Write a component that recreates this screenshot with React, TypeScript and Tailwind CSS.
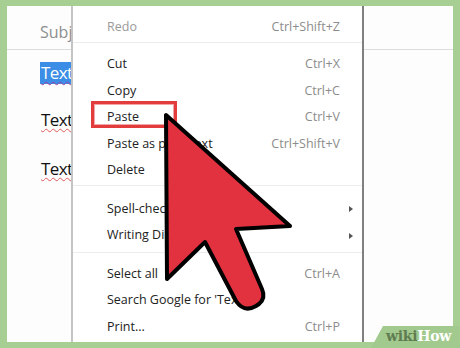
import React from 'react';

type Item = { label: string; shortcut?: string; submenu?: boolean };

const groups: Item[][] = [
	[
		{ label: 'Cut', shortcut: 'Ctrl+X' },
		{ label: 'Copy', shortcut: 'Ctrl+C' },
		{ label: 'Paste', shortcut: 'Ctrl+V' },
		{ label: 'Paste as plain text', shortcut: 'Ctrl+Shift+V' },
		{ label: 'Delete' },
	],
	[
		{ label: 'Spell-check', submenu: true },
		{ label: 'Writing Direction', submenu: true },
	],
	[
		{ label: 'Select all', shortcut: 'Ctrl+A' },
		{ label: "Search Google for 'Text'" },
		{ label: 'Print...', shortcut: 'Ctrl+P' },
	],
];

function Row({ item, muted }: { item: Item; muted?: boolean }) {
	return (
		<div className="flex h-[26.5px] items-center pl-[34px] pr-[9px] pt-[5px]">
			<span className={`flex-1 ${muted ? 'text-[#9a9a9a]' : 'text-[#222]'}`}>{item.label}</span>
			<span className="text-[#8c8c8c]">{item.shortcut}</span>
			<span className="flex w-[13px] justify-end">
				{item.submenu && (
					<span className="h-0 w-0 border-y-[3.5px] border-l-[4px] border-y-transparent border-l-[#555]" />
				)}
			</span>
		</div>
	);
}

export default function App() {
	return (
		<div className="relative h-[348px] w-[460px] overflow-hidden bg-[#a8cf93] px-[7px] pt-[6px] font-['Open_Sans',sans-serif]">
			<div className="flex h-[336px] bg-[#fdfdfd]">
				{/* document behind the menu */}
				<div className="w-[64px] overflow-hidden">
					<div className="flex h-[44px] items-center whitespace-nowrap border-b border-[#dcdcdc] pl-[33px] pt-[8px] text-[16px] text-[#8e8e8e]">
						Subject
					</div>
					<div className="whitespace-nowrap pl-[33px] pt-[12px] text-[17px] leading-[22px] tracking-[-0.6px]">
						<div className="bg-[#3b8de6] pl-[1px] text-white underline decoration-[#a040a0] decoration-wavy decoration-1 underline-offset-2">
							Text
						</div>
						<div className="mt-[25px] pl-[1px] text-[#111] underline decoration-[#e05a5a] decoration-wavy decoration-1 underline-offset-2">
							Text
						</div>
						<div className="mt-[27px] pl-[1px] text-[#111] underline decoration-[#e05a5a] decoration-wavy decoration-1 underline-offset-2">
							Text
						</div>
					</div>
				</div>

				{/* context menu */}
				<div className="w-[293px] border-l-2 border-r-2 border-l-[#c4c4c4] border-r-[#808080] bg-white text-[12.5px]">
					<div className="flex h-[37px] items-center border-b border-[#ececec] pt-[1px]">
						<div className="w-full">
							<Row item={{ label: 'Redo', shortcut: 'Ctrl+Shift+Z' }} muted />
						</div>
					</div>
					<div className="border-b border-[#ececec] pb-[3px] pt-[6px]">
						{groups[0].map((it) => (
							<Row key={it.label} item={it} />
						))}
					</div>
					<div className="border-b border-[#ececec] pb-[5px] pt-[8px]">
						{groups[1].map((it) => (
							<Row key={it.label} item={it} />
						))}
					</div>
					<div className="pt-[6px]">
						{groups[2].map((it) => (
							<Row key={it.label} item={it} />
						))}
					</div>
				</div>

				<div className="flex-1">
					<div className="h-[44px] border-b border-[#dcdcdc]" />
				</div>
			</div>

			{/* highlight box around Paste */}
			<div className="absolute left-[91px] top-[101px] h-[27px] w-[86px] border-[3px] border-[#e23c3c] shadow-[inset_0_0_0_1px_#f3a5a5]" />

			{/* cursor arrow */}
			<svg className="absolute left-0 top-0" width="460" height="348" viewBox="0 0 460 348">
				<path
					d="M166 115 L167 279 L205 242 L236 301 Q244 313 256 306 L259 304 Q266 298 262 289 L236 229 L290 226 Z"
					fill="#e2323f"
					stroke="#000"
					strokeWidth="4"
					strokeLinejoin="round"
				/>
			</svg>

			{/* wikiHow tab */}
			<svg className="absolute left-0 top-0" width="460" height="348" viewBox="0 0 460 348">
				<path d="M371 348 L383 326 L460 326 L460 348 Z" fill="#a3ca8e" />
			</svg>
			<div className="absolute left-[386px] top-[327px] font-['DejaVu_Serif',serif] text-[14px] font-bold leading-[18px] tracking-[-0.3px]">
				<span className="text-[#5f7c51]">wiki</span>
				<span className="text-white">How</span>
			</div>
		</div>
	);
}
